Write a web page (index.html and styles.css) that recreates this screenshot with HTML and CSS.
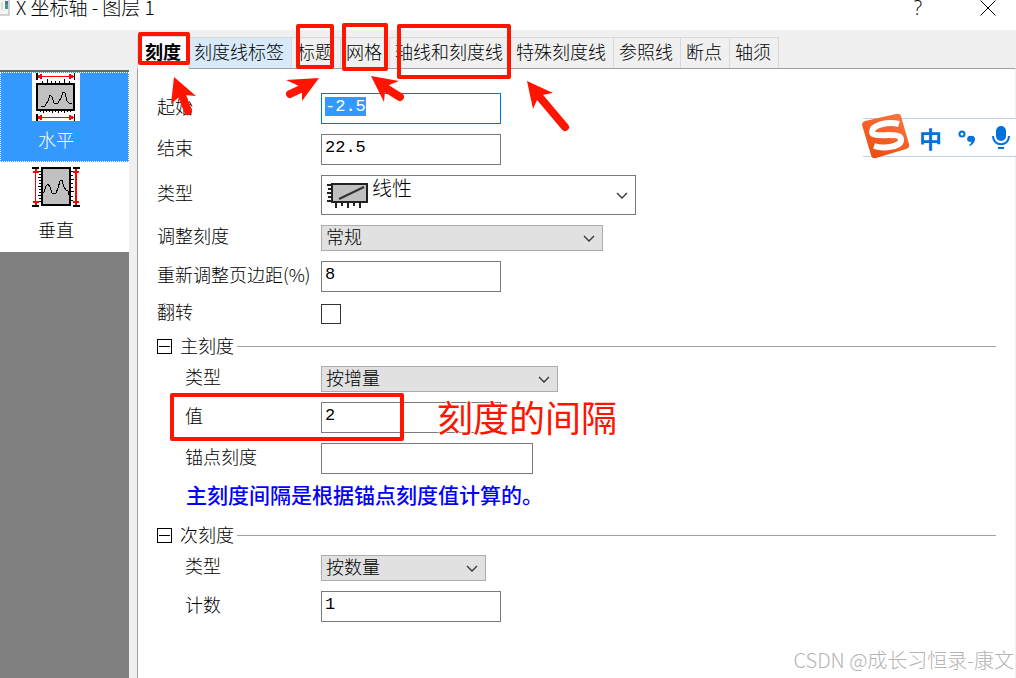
FILE: index.html
```html
<!DOCTYPE html>
<html lang="zh-CN">
<head>
    <meta charset="UTF-8">
    <meta name="viewport" content="width=device-width, initial-scale=1.0">
    <title>X 坐标轴 - 图层 1</title>
    <link rel="stylesheet" href="styles.css">
</head>
<body>
    <div class="dialog">
        <header class="titlebar">
            <svg class="app-icon" width="10" height="16" viewBox="0 0 10 16">
                <rect x="-6" y="-1" width="15" height="16" fill="#f4f4f4" stroke="#a8adb3"/>
                <rect x="1" y="2" width="2" height="8" fill="#dcdcdc"/>
                <rect x="5" y="1" width="3" height="8" fill="#3f9a86"/>
                <rect x="5" y="1" width="3" height="3" fill="#4a6fa5"/>
            </svg>
            <h1>X 坐标轴 - 图层 1</h1>
            <button class="title-button" type="button" aria-label="帮助">?</button>
            <button class="title-button" type="button" aria-label="关闭">
                <svg width="16" height="16" viewBox="0 0 16 16"><path d="M0.5 0.5L15.5 15.5M15.5 0.5L0.5 15.5" stroke="#000" fill="none"/></svg>
            </button>
        </header>

        <div class="content">
            <aside class="sidebar">
                <button class="axis-item selected" type="button">
                    <svg width="48" height="48" viewBox="0 0 48 48" shape-rendering="crispEdges">
                        <rect width="48" height="48" fill="#fff"/>
                        <path d="M5 0V7M42.5 0V7M5 41V48M42.5 41V48" stroke="#000" stroke-width="1.5"/>
                        <path d="M6 3.5H42M6 44.5H42" stroke="#f00"/>
                        <path d="M6 2H8V1H10V6H8V5H6ZM41 2H39V1H37V6H39V5H41ZM6 43H8V42H10V47H8V46H6ZM41 43H39V42H37V47H39V46H41Z" fill="#f00"/>
                        <rect x="5" y="11" width="37" height="26" fill="#c0c0c0" stroke="#000" stroke-width="2"/>
                        <path d="M10.5 8V11M15.5 6V11M19.5 8V11M23.5 8V11M27.5 8V11M32.5 6V11M37.5 8V11M8.5 37V39M11.5 37V40M14.5 37V39M17.5 37V39M20.5 37V40M23.5 37V39M26.5 37V40M29.5 37V39M32.5 37V40M35.5 37V39M38.5 37V39" stroke="#000"/>
                        <path d="M9 33H13L16 28L18 22L20 24L22 30H26L29 25L31 19L33 20L35 28L37 30H40" fill="none" stroke="#000"/>
                    </svg>
                    <span>水平</span>
                </button>
                <button class="axis-item" type="button">
                    <svg width="48" height="48" viewBox="0 0 48 48" shape-rendering="crispEdges">
                        <path d="M0 5H7M0 43H7M41 5H48M41 43H48" stroke="#000" stroke-width="1.5"/>
                        <path d="M3.5 6V42" stroke="#f00"/>
                        <path d="M44 6V42" stroke="#f00" stroke-width="2"/>
                        <path d="M3 6H5V8H7V10H1V8H3ZM3 42H5V40H7V38H1V40H3ZM43 6H45V8H47V10H41V8H43ZM43 42H45V40H47V38H41V40H43Z" fill="#f00"/>
                        <rect x="10" y="5" width="28" height="37" fill="#c0c0c0" stroke="#000" stroke-width="2"/>
                        <path d="M7 8.5H10M7 11.5H9M6 14.5H9M7 17.5H9M7 20.5H9M6 23.5H9M7 26.5H9M7 29.5H9M6 32.5H9M7 35.5H9M7 38.5H9M39 8.5H41M39 12.5H41M39 16.5H42M39 20.5H41M39 24.5H41M39 28.5H42M39 33.5H41M39 37.5H41" stroke="#000"/>
                        <path d="M10 29H12L14 23L16 21L18 24L20 30H24L26 25L28 18L30 17L32 24L34 27L36 28V31H38" fill="none" stroke="#000"/>
                    </svg>
                    <span>垂直</span>
                </button>
            </aside>

            <main class="main">
                <nav class="tabs" role="tablist">
                    <button class="tab active" type="button" role="tab" aria-selected="true">刻度</button>
                    <button class="tab hot" type="button" role="tab">刻度线标签</button>
                    <button class="tab" type="button" role="tab">标题</button>
                    <button class="tab" type="button" role="tab">网格</button>
                    <button class="tab" type="button" role="tab">轴线和刻度线</button>
                    <button class="tab" type="button" role="tab">特殊刻度线</button>
                    <button class="tab" type="button" role="tab">参照线</button>
                    <button class="tab" type="button" role="tab">断点</button>
                    <button class="tab" type="button" role="tab">轴须</button>
                </nav>

                <form class="panel">
                    <div class="row">
                        <label for="from">起始</label>
                        <input class="text-box" id="from" type="text" value="-2.5">
                    </div>
                    <div class="row">
                        <label for="to">结束</label>
                        <input class="text-box" id="to" type="text" value="22.5">
                    </div>
                    <div class="row">
                        <label for="type">类型</label>
                        <div class="icon-select">
                            <select id="type"><option>线性</option></select>
                            <svg width="42" height="27" viewBox="0 0 42 27">
                                <rect x="6" y="2" width="35" height="18" fill="#c0c0c0" stroke="#222" stroke-width="2"/>
                                <path d="M1 3H6M2 7H6M1 11H6M2 15H6M1 19H6M10 20V26M16 20V24M22 20V26M28 20V24M34 20V26" stroke="#222" stroke-width="2"/>
                                <path d="M13 17L38 5" stroke="#333" stroke-width="2"/>
                            </svg>
                        </div>
                    </div>
                    <div class="row">
                        <label for="rescale">调整刻度</label>
                        <select class="drop-down wide" id="rescale"><option>常规</option></select>
                    </div>
                    <div class="row">
                        <label for="margin">重新调整页边距(%)</label>
                        <input class="text-box" id="margin" type="text" value="8">
                    </div>
                    <div class="row check-row">
                        <label for="reverse">翻转</label>
                        <input class="check-box" id="reverse" type="checkbox">
                    </div>

                    <div class="group">
                        <button class="toggle" type="button" aria-label="折叠主刻度"></button>
                        <h2>主刻度</h2>
                    </div>
                    <div class="row sub">
                        <label for="major-type">类型</label>
                        <select class="drop-down medium" id="major-type"><option>按增量</option></select>
                    </div>
                    <div class="row sub">
                        <label for="major-value">值</label>
                        <input class="text-box" id="major-value" type="text" value="2">
                    </div>
                    <div class="row sub">
                        <label for="anchor">锚点刻度</label>
                        <input class="text-box long" id="anchor" type="text">
                    </div>
                    <p class="hint">主刻度间隔是根据锚点刻度值计算的。</p>

                    <div class="group">
                        <button class="toggle" type="button" aria-label="折叠次刻度"></button>
                        <h2>次刻度</h2>
                    </div>
                    <div class="row sub">
                        <label for="minor-type">类型</label>
                        <select class="drop-down narrow" id="minor-type"><option>按数量</option></select>
                    </div>
                    <div class="row sub">
                        <label for="minor-count">计数</label>
                        <input class="text-box" id="minor-count" type="text" value="1">
                    </div>
                </form>
            </main>
        </div>

        <!-- red marks over the dialog -->
        <svg class="marks" width="640" height="450" viewBox="0 0 640 450">
            <g fill="none" stroke="#ff1400" stroke-width="4" stroke-linejoin="round">
                <rect x="140" y="34" width="48" height="29"/>
                <rect x="298" y="26" width="34" height="41"/>
                <rect x="344" y="25" width="42" height="44"/>
                <rect x="399" y="26" width="110" height="51"/>
                <rect x="172" y="395" width="230" height="44"/>
            </g>
            <g fill="none" stroke="#ff1400" stroke-width="8" stroke-linecap="round">
                <path d="M181 93L188 111"/>
                <path d="M305 87L290 94"/>
                <path d="M384 87L400 97"/>
                <path d="M538 95L565 127"/>
            </g>
            <g fill="#ff1400">
                <path d="M174 77L196 96L184 95L179 97L171 104Z"/>
                <path d="M319 78L302 101L302 93L299 86L286 80Z"/>
                <path d="M371 76L399 81L389 85L385 91L384 102Z"/>
                <path d="M527 81L553 93L542 95L537 100L533 109Z"/>
            </g>
        </svg>
        <div class="mark-text">刻度的间隔</div>

        <div class="ime-bar">
            <svg class="ime-logo" width="48" height="46" viewBox="0 0 48 46">
                <defs>
                    <linearGradient id="ime-orange" x1="0.8" y1="0" x2="0.2" y2="1">
                        <stop offset="0" stop-color="#f97542"/>
                        <stop offset="1" stop-color="#ee4b0c"/>
                    </linearGradient>
                </defs>
                <path d="M3 8L34 1Q38 0 39 3L47 31Q48 35 44 36L14 45Q10 46 9 42L0 12Q0 9 3 8Z" fill="url(#ime-orange)"/>
                <path d="M37 11C26 8 10 12 10 19C10 26 38 18 39 26C40 34 22 36 12 33" fill="none" stroke="#fff" stroke-width="6"/>
            </svg>
            <button class="ime-button" type="button">中</button>
            <button class="ime-button" type="button" aria-label="标点">
                <svg width="18" height="18" viewBox="0 0 18 18">
                    <circle cx="4" cy="5" r="2.5" fill="none" stroke="#0071dc" stroke-width="2"/>
                    <path d="M13 7A3 3 0 1 0 13.500 12.500Q13 15 11 16L12 17Q17 14 17 10A3 3 0 0 0 13 7Z" fill="#0071dc"/>
                </svg>
            </button>
            <button class="ime-button" type="button" aria-label="语音">
                <svg width="18" height="24" viewBox="0 0 18 24">
                    <rect x="4" y="0" width="10" height="15" rx="5" fill="#0071dc"/>
                    <path d="M1 10C1 21 17 21 17 10" fill="none" stroke="#0071dc" stroke-width="2"/>
                    <path d="M6 22H12" stroke="#0071dc" stroke-width="2"/>
                </svg>
            </button>
        </div>

        <div class="watermark">CSDN @成长习恒录-康文</div>
    </div>

    <script>
        // Start with the first value selected, ready to be typed over
        const from = document.getElementById('from');
        from.focus();
        from.select();
    </script>
</body>
</html>
```
FILE: styles.css
```css
* {
    box-sizing: border-box;
}

body {
    font-family: "Noto Sans CJK SC", sans-serif;
    font-size: 18px;
    font-weight: 300;
    margin: 0;
    color: #000;
    background-color: #f0f0f0;
}

button,
input,
select {
    font: inherit;
    color: inherit;
    margin: 0;
    padding: 0;
    border: none;
    border-radius: 0;
    background: none;
}

.dialog {
    position: relative;
    display: flex;
    flex-direction: column;
    min-height: 100vh;
    overflow: hidden;
}

/* Title bar */
.titlebar {
    display: flex;
    align-items: flex-start;
    height: 30px;
    padding-right: 20px;
    background-color: #fff;
}

.titlebar h1 {
    flex: 1;
    margin: 0 0 0 6px;
    font-size: 19px;
    font-weight: 300;
    line-height: 14px;
}

.title-button {
    display: flex;
    justify-content: center;
    width: 16px;
    height: 16px;
    margin-left: 54px;
    font-family: "Open Sans", sans-serif;
    font-size: 20px;
    line-height: 16px;
}

.content {
    flex: 1;
    display: grid;
    grid-template-columns: 129px 1fr;
    gap: 8px;
}

/* Axis list */
.sidebar {
    margin-top: 40px;
    border-top: 2px solid #696969;
    background-color: #808080;
}

.axis-item {
    display: flex;
    flex-direction: column;
    align-items: center;
    gap: 6px;
    width: 100%;
    height: 90px;
    padding-right: 17px;
    border: 1px solid #fff;
    background-color: #fff;
    line-height: 24px;
}

.axis-item.selected {
    border: 1px dotted #fff;
    background-color: #3399ff;
    color: #fff;
}

/* Tabs */
.main {
    display: flex;
    flex-direction: column;
    padding-top: 7px;
}

.tabs {
    display: flex;
    align-items: flex-end;
    height: 31px;
}

.tab {
    height: 31px;
    padding: 0 7px 4px 5px;
    border-top: 1px solid #d9d9d9;
    border-right: 1px solid #d9d9d9;
    white-space: nowrap;
    line-height: 26px;
}

.tab.hot {
    background-color: #d8eaf9;
}

.tab.active {
    position: relative;
    height: 33px;
    margin-bottom: -1px;
    border-left: 1px solid #d9d9d9;
    padding-left: 7px;
    background-color: #fff;
    font-weight: 700;
}

/* Settings */
.panel {
    flex: 1;
    display: flex;
    flex-direction: column;
    gap: 10px;
    padding: 24px 19px;
    border: 1px solid #a0a0a0;
    border-right-color: #f0f0f0;
    border-bottom: none;
    background-color: #fff;
}

.row {
    display: grid;
    grid-template-columns: 164px 1fr;
    align-items: center;
    justify-items: start;
}

.row label {
    padding-bottom: 6px;
    line-height: 18px;
    white-space: nowrap;
}

.row.sub label {
    padding-left: 28px;
}

.check-row {
    height: 24px;
}

.text-box {
    width: 180px;
    height: 31px;
    padding: 0 3px 4px;
    border: 1px solid #7a7a7a;
    background-color: #fff;
    font-family: "Liberation Mono", monospace;
    font-size: 17px;
    font-weight: 400;
}

.text-box.long {
    width: 212px;
}

.text-box:focus {
    outline: none;
    border-color: #0078d7;
}

.text-box::selection {
    background-color: #3399ff;
    color: #fff;
}

.drop-down,
.icon-select select {
    appearance: none;
    background: #e1e1e1 url("data:image/svg+xml,%3Csvg xmlns='http://www.w3.org/2000/svg' width='12' height='7'%3E%3Cpath d='M1 1L6 6L11 1' fill='none' stroke='%23333' stroke-width='1.3'/%3E%3C/svg%3E") no-repeat right 7px center;
}

.drop-down {
    height: 26px;
    padding: 0 24px 4px 4px;
    border: 1px solid #adadad;
    line-height: 20px;
}

.wide {
    width: 282px;
}

.medium {
    width: 237px;
}

.narrow {
    width: 165px;
}

.icon-select {
    display: grid;
    width: 315px;
}

.icon-select select,
.icon-select svg {
    grid-area: 1 / 1;
}

.icon-select select {
    height: 40px;
    padding: 0 24px 14px 50px;
    border: 1px solid #7a7a7a;
    background-color: #fff;
    font-size: 20px;
    line-height: 24px;
}

.icon-select svg {
    margin: 7px 0 0 5px;
    pointer-events: none;
}

.check-box {
    appearance: none;
    width: 20px;
    height: 20px;
    border: 1px solid #333;
    background-color: #fff;
}

.check-box:checked {
    background-color: #0078d7;
}

.group {
    display: flex;
    align-items: center;
    height: 20px;
}

.group::after {
    content: "";
    flex: 1;
    height: 1px;
    margin-left: 3px;
    background-color: #a0a0a0;
}

.group h2 {
    margin: 0 0 0 8px;
    padding-bottom: 2px;
    font-size: 18px;
    font-weight: 300;
    line-height: 18px;
}

.toggle {
    display: grid;
    place-items: center;
    width: 15px;
    height: 15px;
    border: 1px solid #000;
}

.toggle::before {
    content: "";
    width: 11px;
    height: 1px;
    background-color: #000;
}

.hint {
    height: 31px;
    margin: 0 0 0 29px;
    color: #0000ff;
    font-size: 21px;
    font-weight: 500;
    line-height: 20px;
}

/* Marks and floating bar */
.marks {
    position: absolute;
    top: 0;
    left: 0;
    pointer-events: none;
}

.mark-text {
    position: absolute;
    top: 396px;
    left: 437px;
    color: #ff1400;
    font-size: 36px;
    font-weight: 400;
    line-height: 40px;
    text-shadow: 1px 0 #fff, -1px 0 #fff;
}

.ime-bar {
    position: absolute;
    top: 118px;
    right: 0;
    display: flex;
    align-items: center;
    gap: 16px;
    height: 39px;
    padding-right: 6px;
    border: 1px solid #bdd0e6;
    border-width: 1px 0;
    background-color: #fff;
}

.ime-logo {
    margin: -8px -7px -4px -1px;
}

.ime-button {
    display: flex;
    align-items: center;
    color: #0071dc;
    font-size: 23px;
    font-weight: 700;
    line-height: 20px;
}

.watermark {
    position: absolute;
    right: 2px;
    bottom: 4px;
    color: #b4b4b4;
    font-size: 20px;
    line-height: 28px;
}
```
